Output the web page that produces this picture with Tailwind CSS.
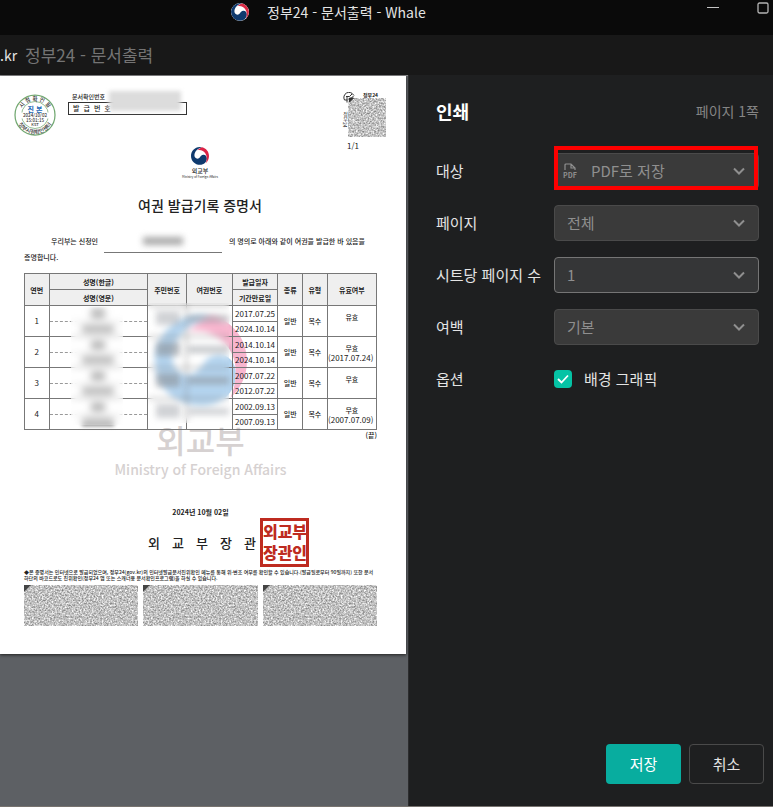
<!DOCTYPE html>
<html lang="ko">
<head>
  <meta charset="UTF-8" />
  <meta name="viewport" content="width=device-width, initial-scale=1.0"/>
  <title>정부24 - 문서출력 - Whale</title>
  <script src="https://cdn.jsdelivr.net/npm/@tailwindcss/browser@4"></script>
</head>
<body class="min-h-screen flex flex-col overflow-x-hidden bg-[#1e1f20] font-['Noto_Sans_CJK_KR',sans-serif] text-[#e4e4e4]">

  <!-- shared shapes -->
  <svg class="absolute w-0 h-0" aria-hidden="true">
    <symbol id="swirl" viewBox="0 0 100 100">
      <path class="fill-(--blue)" d="M52 0C22-1 0 22 0 50c0 28 22 49 50 49 22 0 38-15 38-35 0-13-9-22-20-21-17 1-16 22-32 22-12 0-18-10-17-21C21 24 36 8 62 1Z"/>
      <path class="fill-(--red)" d="M62 1c22 5 38 25 38 49 0 16-7 30-18 40 8-18 8-40-2-54C71 23 56 14 36 18 44 10 52 4 62 1Z"/>
    </symbol>
    <filter id="noise" x="0" y="0" width="100%" height="100%" color-interpolation-filters="sRGB">
      <feTurbulence type="fractalNoise" baseFrequency="0.6" numOctaves="2" seed="7"/>
      <feColorMatrix values="0.8 0 0 0 0.36  0.8 0 0 0 0.36  0.8 0 0 0 0.36  0 0 0 0 1"/>
    </filter>
  </svg>

  <!-- title bar -->
  <header class="h-[35px] bg-[#0a0a0a] flex items-start justify-between pl-[231px] pr-1">
    <div class="flex items-center h-6 gap-[18px]">
      <svg class="size-[18px] rounded-full bg-white [--blue:#0f3a6e] [--red:#d92b45]"><use href="#swirl"/></svg>
      <h1 class="text-[14px] leading-6 whitespace-nowrap">정부24 - 문서출력 - Whale</h1>
    </div>
    <div class="flex gap-[38px]">
      <button aria-label="최소화" class="h-4 w-3"><svg class="size-3" viewBox="0 0 12 12" stroke="#c4c4c4"><path d="M0 5.5h12"/></svg></button>
      <button aria-label="최대화" class="h-4 w-3"><svg class="size-3" viewBox="0 0 12 12" fill="none" stroke="#b4b4b4" stroke-width="1.3"><rect x="1" y="1" width="10" height="10" rx="1.5"/></svg></button>
    </div>
  </header>
  <div class="h-10 bg-[#181818] flex items-center gap-2 whitespace-nowrap">
    <span class="text-[14px]">.kr</span><span class="text-[17px] text-[#747474]">정부24 - 문서출력</span>
  </div>

  <main class="flex-1 flex border-b border-[#77736f]">

    <!-- preview -->
    <section class="flex-1 min-w-0 bg-[#5d6064] border-t border-[#8b8b8d] pr-0.5">
      <article class="bg-white text-[#222] pt-4 pb-7 shadow-[0_1px_3px_#222]">

        <div class="flex items-start h-[55px] pl-[14px] pr-5">
          <svg class="size-[42px] mt-0.5" viewBox="0 0 84 84" fill="none" text-anchor="middle">
            <circle cx="42" cy="42" r="40" stroke="#72a871" stroke-width="2.5"/>
            <circle cx="42" cy="42" r="27" stroke="#72a871" stroke-width="1.5"/>
            <path id="arcTop" d="M13 42a29 29 0 0 1 58 0"/>
            <path id="arcBottom" d="M4 42a38 38 0 0 0 76 0"/>
            <g fill="#333" font-weight="500">
              <text font-size="11"><textPath href="#arcTop" startOffset="50%">시 점 확 인 필</textPath></text>
              <text font-size="11"><textPath href="#arcBottom" startOffset="50%">정부시점확인센터</textPath></text>
              <rect x="14" y="37" width="56" height="12" fill="#fff"/>
              <text x="42" y="46" font-size="9">2024/10/02</text>
              <text x="42" y="55" font-size="9">15:01:15</text>
              <text x="42" y="63" font-size="8">KST</text>
            </g>
            <text x="42" y="35" font-size="14" font-weight="700" fill="#1765b3">진 본</text>
          </svg>

          <div class="relative ml-3 w-[119px] text-[6px] leading-[10px] font-medium">
            <p class="pl-1">문서확인번호</p>
            <p class="h-[13px] leading-[11px] border border-[#333] pl-1 flex gap-1 text-[7px]"><span>발</span><span>급</span><span>번</span><span>호</span></p>
            <div class="absolute left-[41px] -top-px w-[72px] h-5 bg-[#dcdcdc] blur-[2px]"></div>
          </div>

          <div class="relative ml-auto w-[43px] text-[5px] leading-[6px]">
            <p class="text-center pl-3 font-bold">정부24</p>
            <svg class="ml-[5px] w-[38px] h-[39px]"><rect width="100%" height="100%" filter="url(#noise)"/></svg>
            <svg class="absolute left-0 top-0 size-3" viewBox="0 0 24 24" fill="none" stroke="#333" stroke-width="2"><path d="M3 16A10 10 0 0 1 21 6M6 9h7l5-5M8 10v11M3 16h6M14 15l8-8"/><path fill="#333" d="M13 12h8l-8 8z"/></svg>
            <span class="absolute -left-px top-[20px] [writing-mode:vertical-rl]">정부24</span>
            <p class="mt-1 text-[8px] leading-[10px] ml-1">1/1</p>
          </div>
        </div>

        <div class="flex flex-col items-center pr-1.5">
          <svg class="size-[18px] [--blue:#0f3a6e] [--red:#dc2346]"><use href="#swirl"/></svg>
          <p class="mt-0.5 text-[6px] leading-[8px] font-medium">외교부</p>
          <p class="text-[3px] leading-[4px]">Ministry of Foreign Affairs</p>
          <h2 class="mt-3.5 text-[14px] leading-6 font-medium">여권 발급기록 증명서</h2>
        </div>

        <div class="pl-6 pr-[29px]">
          <div class="mt-4 text-[7px] leading-4 font-medium">
            <div class="flex justify-between pl-[27px] pr-3 whitespace-nowrap">
              <span>우리부는 신청인</span>
              <span class="w-[118px] h-5 border-b border-[#777] flex justify-center"><span class="mt-1 w-10 h-2 bg-[#aaa] blur-[3px]"></span></span>
              <span>의 명의로 아래와 같이 여권을 발급한 바 있음을</span>
            </div>
            <p class="-mt-1">증명합니다.</p>
          </div>

          <div class="relative mt-2">
            <!-- watermark -->
            <div class="absolute inset-x-0 top-[42px] flex flex-col items-center text-[#d6d1d1]">
              <svg class="size-[92px] [--blue:#b4d4ef] [--red:#f8b6cf]"><use href="#swirl"/></svg>
              <p class="mt-3 text-[32px] leading-10 font-medium">외교부</p>
              <p class="text-[14px] leading-5 font-medium">Ministry of Foreign Affairs</p>
            </div>

            <table class="relative w-full table-fixed border-collapse text-center text-[7px] leading-[10px] [&_td]:p-0 [&_th]:p-0 [&_td]:border [&_th]:border [&_td]:border-[#777] [&_th]:border-[#777]">
              <colgroup>
                <col class="w-[7%]"><col class="w-[28%]"><col class="w-[11%]"><col class="w-[13%]"><col class="w-[13%]"><col class="w-[7%]"><col class="w-[7%]"><col class="w-[14%]">
              </colgroup>
              <thead class="bg-[#efefef]">
                <tr class="h-4"><th rowspan="2">연번</th><th>성명(한글)</th><th rowspan="2">주민번호</th><th rowspan="2">여권번호</th><th>발급일자</th><th rowspan="2">종류</th><th rowspan="2">유형</th><th rowspan="2">유효여부</th></tr>
                <tr class="h-4"><th>성명(영문)</th><th>기간만료일</th></tr>
              </thead>
              <tbody id="records"></tbody>
            </table>

            <!-- hidden personal data -->
            <div class="absolute left-[47px] top-[34px] w-[52px] h-[118px] bg-white/40 backdrop-blur-[3px]"></div>
            <div class="absolute left-[35%] top-[30px] w-[23%] h-[120px] backdrop-blur-[3px] flex">
              <div class="w-1/2 px-2 pt-2 flex flex-col gap-[17px]">
                <div class="h-3.5 bg-[#8a8f96]/40 blur-[3px]"></div><div class="h-3.5 bg-[#8a8f96]/60 blur-[3px]"></div><div class="h-3.5 bg-[#8a8f96]/60 blur-[3px]"></div><div class="h-3.5 bg-[#8a8f96]/40 blur-[3px]"></div>
              </div>
              <div class="w-1/2 pt-3 flex flex-col gap-6">
                <div class="h-[7px] bg-[#8a8f96]/50 blur-[3px]"></div><div class="h-[7px] bg-[#8a8f96]/50 blur-[3px]"></div><div class="h-[7px] bg-[#8a8f96]/60 blur-[3px]"></div><div class="h-[7px] bg-[#8a8f96]/40 blur-[3px]"></div>
              </div>
            </div>
          </div>

          <p class="text-right text-[7px] leading-[10px] font-medium">(끝)</p>
          <p class="mt-[66px] text-center text-[7px] leading-3 font-bold">2024년 10월 02일</p>
          <div class="flex items-center justify-center gap-1 pl-14">
            <p class="flex gap-3 text-[13px] leading-5 font-medium"><span>외</span><span>교</span><span>부</span><span>장</span><span>관</span></p>
            <p class="size-[49px] border-3 border-[#be2b20] text-[#be2b20] text-[16px] leading-[21px] font-black text-center whitespace-nowrap">외교부<br>장관인</p>
          </div>
          <p class="mt-0.5 text-[5px] leading-[6px] font-medium">◆본 증명서는 인터넷으로 발급되었으며, 정부24(gov.kr)의 인터넷발급문서진위확인 메뉴를 통해 위·변조 여부를 확인할 수 있습니다.(발급일로부터 90일까지) 또한 문서하단의 바코드로도 진위확인(정부24 앱 또는 스캐너용 문서확인프로그램)을 하실 수 있습니다.</p>
          <div class="mt-1 grid grid-cols-3 gap-[5px]">
            <svg class="w-full h-[41px]"><rect width="100%" height="100%" filter="url(#noise)"/><path d="M0 0h7L0 7z" fill="#444"/></svg>
            <svg class="w-full h-[41px]"><rect width="100%" height="100%" filter="url(#noise)"/><path d="M0 0h7L0 7z" fill="#444"/></svg>
            <svg class="w-full h-[41px]"><rect width="100%" height="100%" filter="url(#noise)"/><path d="M0 0h7L0 7z" fill="#444"/></svg>
          </div>
        </div>
      </article>
    </section>

    <!-- print settings -->
    <form class="w-[365px] shrink-0 flex flex-col border-l border-[#2c2d2e] pl-[27px] pt-5 text-[15px]">
      <div class="flex items-center justify-between h-8 pr-[14px]">
        <h2 class="text-lg font-bold text-white">인쇄</h2>
        <span class="text-[14px] text-[#858585]">페이지 1쪽</span>
      </div>

      <div class="mt-[26px] flex flex-col gap-4 pr-[14px]">
        <div class="flex items-center justify-between h-9">
          <label for="target">대상</label>
          <div class="relative w-[205px]">
            <select id="target" class="appearance-none w-full h-9 pl-9 rounded-sm bg-[#3a3a3a] border border-[#4a4a4a] text-[#8f8f8f]"><option>PDF로 저장</option></select>
            <svg class="absolute left-2 top-2.5 w-4 h-4 pointer-events-none" viewBox="0 0 16 16" fill="none" stroke="#8f8f8f" stroke-width="1.2">
              <path d="M3 7V2q0-1 1-1h5l4 4v2M9 1v4h4"/>
              <text x="8" y="15" text-anchor="middle" font-size="7" font-weight="700" fill="#8f8f8f" stroke="none">PDF</text>
            </svg>
            <svg class="absolute right-[14px] top-3 size-3 pointer-events-none" viewBox="0 0 12 12" fill="none" stroke="#8f8f8f" stroke-width="2"><path d="M1 3.5l5 5 5-5"/></svg>
            <div class="absolute left-0 right-px -top-[7px] -bottom-px border-4 border-[#fe0000] pointer-events-none"></div>
          </div>
        </div>

        <div class="flex items-center justify-between h-9">
          <label for="pages">페이지</label>
          <div class="relative w-[205px]">
            <select id="pages" class="appearance-none w-full h-9 pl-3 rounded-sm bg-[#3a3a3a] border border-[#4a4a4a] text-[#8f8f8f]"><option>전체</option></select>
            <svg class="absolute right-[14px] top-3 size-3 pointer-events-none" viewBox="0 0 12 12" fill="none" stroke="#8f8f8f" stroke-width="2"><path d="M1 3.5l5 5 5-5"/></svg>
          </div>
        </div>

        <div class="flex items-center justify-between h-9">
          <label for="perSheet" class="whitespace-nowrap">시트당 페이지 수</label>
          <div class="relative w-[205px]">
            <select id="perSheet" class="appearance-none w-full h-9 pl-3 rounded-sm bg-[#353637] border border-[#757575] text-[#8f8f8f]"><option>1</option></select>
            <svg class="absolute right-[14px] top-3 size-3 pointer-events-none" viewBox="0 0 12 12" fill="none" stroke="#8f8f8f" stroke-width="2"><path d="M1 3.5l5 5 5-5"/></svg>
          </div>
        </div>

        <div class="flex items-center justify-between h-9">
          <label for="margin">여백</label>
          <div class="relative w-[205px]">
            <select id="margin" class="appearance-none w-full h-9 pl-3 rounded-sm bg-[#3a3a3a] border border-[#4a4a4a] text-[#8f8f8f]"><option>기본</option></select>
            <svg class="absolute right-[14px] top-3 size-3 pointer-events-none" viewBox="0 0 12 12" fill="none" stroke="#8f8f8f" stroke-width="2"><path d="M1 3.5l5 5 5-5"/></svg>
          </div>
        </div>

        <div class="flex items-center justify-between h-9">
          <span>옵션</span>
          <label class="relative w-[205px] flex items-center gap-3">
            <input type="checkbox" checked class="appearance-none size-[18px] rounded bg-[#05c3a5]">
            <svg class="absolute left-[3px] size-3 pointer-events-none" viewBox="0 0 12 12" fill="none" stroke="#fff" stroke-width="1.8"><path d="M1 6l3.5 3.5L11 2.5"/></svg>
            배경 그래픽
          </label>
        </div>
      </div>

      <div class="mt-auto flex justify-end gap-2 pr-[9px] pb-[22px]">
        <button type="button" class="w-[75px] h-10 rounded-sm bg-[#08ad9f] text-white">저장</button>
        <button type="button" class="w-[75px] h-10 rounded-sm border border-[#4a4a4a]">취소</button>
      </div>
    </form>
  </main>

<script>
  const records = [
    ["2017.07.25", "2024.10.14", "유효", ""],
    ["2014.10.14", "2024.10.14", "무효", "(2017.07.24)"],
    ["2007.07.22", "2012.07.22", "무효", ""],
    ["2002.09.13", "2007.09.13", "무효", "(2007.07.09)"],
  ];

  const body = document.getElementById("records");

  records.forEach((r, i) => {
    body.innerHTML += `
      <tr class="h-4 text-[8px]">
        <td rowspan="2">${i + 1}</td>
        <td class="border-b-0!"><div class="mx-auto w-3.5 h-2 bg-[#777] blur-[2px]"></div></td>
        <td rowspan="2"></td>
        <td rowspan="2"></td>
        <td>${r[0]}</td>
        <td rowspan="2" class="text-[7px] font-medium">일반</td>
        <td rowspan="2" class="text-[7px] font-medium">복수</td>
        <td rowspan="2" class="leading-[9px]! whitespace-nowrap"><span class="text-[7px] font-medium">${r[2]}</span><br>${r[3]}&nbsp;</td>
      </tr>
      <tr class="h-[15px] text-[8px]">
        <td class="border-t! border-t-[#999]! [border-top-style:dashed]!"><div class="mx-auto w-8 h-2 bg-[#888] blur-[2px]"></div></td>
        <td>${r[1]}</td>
      </tr>
    `;
  });
</script>
</body>
</html>
